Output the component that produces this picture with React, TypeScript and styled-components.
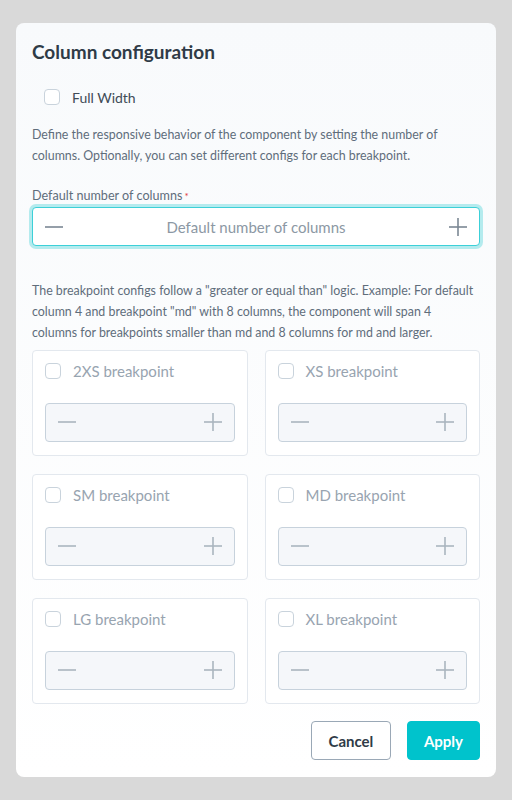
import React from 'react'
import styled, { createGlobalStyle } from 'styled-components'

const GlobalStyle = createGlobalStyle`
    * { box-sizing: border-box; }
    html, body {
        margin: 0;
        padding: 0;
        background: #d9d9d9;
        font-family: "Lato", "Liberation Sans", sans-serif;
    }
`

const breakpoints = ['2XS', 'XS', 'SM', 'MD', 'LG', 'XL']

const MinusIcon = ({ color }: { color: string }) => (
    <svg width="18" height="18" viewBox="0 0 18 18">
        <line x1="0" y1="9" x2="18" y2="9" stroke={color} strokeWidth="1.6" />
    </svg>
)

const PlusIcon = ({ color }: { color: string }) => (
    <svg width="18" height="18" viewBox="0 0 18 18">
        <line x1="0" y1="9" x2="18" y2="9" stroke={color} strokeWidth="1.6" />
        <line x1="9" y1="0" x2="9" y2="18" stroke={color} strokeWidth="1.6" />
    </svg>
)

const App = () => {
    return (
        <Page>
            <GlobalStyle />
            <Modal>
                <Title>Column configuration</Title>

                <CheckRow $indent={12}>
                    <Box />
                    <CheckLabel>Full Width</CheckLabel>
                </CheckRow>

                <Description $top={18}>
                    Define the responsive behavior of the component by setting the number of columns. Optionally, you can set different configs for each breakpoint.
                </Description>

                <FieldLabel>
                    Default number of columns<Required>*</Required>
                </FieldLabel>
                <NumberInput $active>
                    <MinusIcon color="#7b8894" />
                    <Placeholder>Default number of columns</Placeholder>
                    <PlusIcon color="#7b8894" />
                </NumberInput>

                <Description $top={35}>
                    The breakpoint configs follow a "greater or equal than" logic. Example: For default column 4 and breakpoint "md" with 8 columns, the component will span 4<br />
                    columns for breakpoints smaller than md and 8 columns for md and larger.
                </Description>

                <Grid>
                    {breakpoints.map((bp) => (
                        <Card key={bp}>
                            <CheckRow $indent={0}>
                                <Box />
                                <CheckLabel $muted>{bp} breakpoint</CheckLabel>
                            </CheckRow>
                            <NumberInput>
                                <MinusIcon color="#aab5bf" />
                                <PlusIcon color="#aab5bf" />
                            </NumberInput>
                        </Card>
                    ))}
                </Grid>

                <Footer>
                    <Button>Cancel</Button>
                    <Button $primary>Apply</Button>
                </Footer>
            </Modal>
        </Page>
    )
}

export default App

const Page = styled.div`
    padding: 23px 16px;
    min-height: 800px;
`

const Modal = styled.div`
    display: flex;
    flex-direction: column;
    width: 480px;
    height: 754px;
    padding: 16px 16px 17px;
    border-radius: 8px;
    background: linear-gradient(#f8fafc, #ffffff);
    color: #2d3a46;
`

const Title = styled.h2`
    margin: 0;
    font-size: 19px;
    line-height: 26px;
    font-weight: 700;
    color: #2f3b47;
`

const CheckRow = styled.div<{ $indent: number }>`
    display: flex;
    align-items: center;
    gap: 12px;
    height: 20px;
    margin-top: ${(p) => (p.$indent ? '22px' : '0')};
    padding-left: ${(p) => p.$indent}px;
`

const Box = styled.span`
    width: 16px;
    height: 16px;
    border: 1px solid #c9d3dc;
    border-radius: 4px;
    background: #ffffff;
    flex-shrink: 0;
`

const CheckLabel = styled.span<{ $muted?: boolean }>`
    font-size: ${(p) => (p.$muted ? '15px' : '14px')};
    color: ${(p) => (p.$muted ? '#98a4b0' : '#3f4b57')};
`

const Description = styled.p<{ $top: number }>`
    margin: ${(p) => p.$top}px 0 0;
    font-size: 12.4px;
    line-height: 20.7px;
    color: #5f6d7b;
`

const FieldLabel = styled.div`
    margin-top: 21px;
    font-size: 12.6px;
    line-height: 18px;
    color: #5f6d7b;
`

const Required = styled.span`
    color: #e0363b;
    font-size: 10px;
    margin-left: 2px;
    vertical-align: top;
`

const NumberInput = styled.div<{ $active?: boolean }>`
    display: flex;
    align-items: center;
    justify-content: space-between;
    height: 39px;
    margin-top: ${(p) => (p.$active ? '2px' : '22px')};
    padding: 0 12px;
    border-radius: 4px;
    border: 1px solid ${(p) => (p.$active ? '#3cd0d8' : '#c7d2dc')};
    background: ${(p) => (p.$active ? '#ffffff' : '#f5f7fa')};
    box-shadow: ${(p) => (p.$active ? '0 0 0 3px #b4ebee' : 'none')};
`

const Placeholder = styled.span`
    font-size: 15px;
    color: #8c98a4;
`

const Grid = styled.div`
    display: grid;
    grid-template-columns: 1fr 1fr;
    column-gap: 17px;
    row-gap: 18px;
    margin-top: 6px;
`

const Card = styled.div`
    height: 106px;
    padding: 10px 12px 0;
    border: 1px solid #e3e8ee;
    border-radius: 4px;
    background: #ffffff;
`

const Footer = styled.div`
    display: flex;
    justify-content: flex-end;
    gap: 16px;
    margin-top: auto;
`

const Button = styled.button<{ $primary?: boolean }>`
    height: 39px;
    padding: 0 16px;
    min-width: ${(p) => (p.$primary ? '73px' : '80px')};
    border-radius: 4px;
    font-family: inherit;
    font-size: 15px;
    font-weight: 700;
    border: 1px solid ${(p) => (p.$primary ? '#00c3cc' : '#9aa8b6')};
    background: ${(p) => (p.$primary ? '#00c3cc' : '#ffffff')};
    color: ${(p) => (p.$primary ? '#ffffff' : '#2f3b47')};
`
